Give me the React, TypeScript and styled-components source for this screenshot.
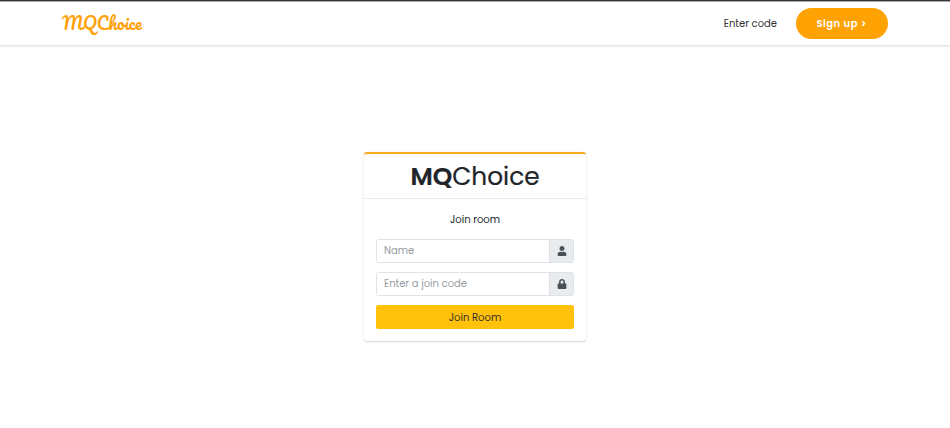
import React from 'react';
import styled, { createGlobalStyle } from 'styled-components';
import { FaUser, FaLock } from 'react-icons/fa';

const GlobalStyle = createGlobalStyle`
  *, *::before, *::after { box-sizing: border-box; }
  body {
    margin: 0;
    background: #fff;
    color: #212529;
    font-family: Poppins, Inter, 'Open Sans', sans-serif;
    font-size: 10px;
    overflow: hidden;
  }
`;

const Page = styled.div`
  height: 428px;
  display: flex;
  flex-direction: column;
`;

const Navbar = styled.header`
  height: 45px;
  flex: none;
  display: flex;
  align-items: center;
  padding: 0 62px 0;
  border-top: 1px solid #38333d;
  box-shadow: inset 0 1px 0 #aaa7ad, 0 1px 2px rgba(0, 0, 0, 0.16);
`;

const Logo = styled.a`
  color: #ffa20a;
  font-family: Pacifico, Lato, sans-serif;
  font-size: 17px;
  font-weight: 400;
  line-height: 24px;
  margin-right: auto;
`;

const NavLink = styled.a`
  color: #333;
  font-size: 10px;
  padding-top: 1px;
  margin-right: 18.5px;
`;

const SignUp = styled.a`
  width: 92.5px;
  height: 31px;
  display: flex;
  align-items: center;
  justify-content: center;
  padding-top: 1px;
  border-radius: 16px;
  background: #ffa203;
  color: #fff;
  font-size: 10px;
  font-weight: 600;
  letter-spacing: 0.5px;
`;

const Main = styled.main`
  flex: 1;
  display: flex;
  justify-content: center;
  align-items: flex-start;
  padding-top: 107px;
`;

const Card = styled.section`
  width: 222px;
  height: 189px;
  border-top: 2px solid #f9ac1f;
  border-radius: 3px;
  background: #fff;
  box-shadow: 0 0 1px rgba(0, 0, 0, 0.14), 0 1px 2px rgba(0, 0, 0, 0.16);
`;

const CardHeader = styled.h1`
  height: 45px;
  margin: 0;
  padding-top: 1px;
  display: flex;
  align-items: center;
  justify-content: center;
  border-bottom: 1px solid #e9eaeb;
  font-size: 24.8px;
  font-weight: 400;
  -webkit-text-stroke: 0.2px #212529;

  b { font-weight: 600; }
`;

const CardBody = styled.form`
  display: flex;
  flex-direction: column;
  padding: 13px 12px 12px;
`;

const Message = styled.p`
  margin: 0 0 11px;
  line-height: 16px;
  text-align: center;
`;

const InputGroup = styled.label`
  height: 24px;
  margin-bottom: 9px;
  display: flex;
  border: 1px solid #dfe3e7;
  border-radius: 2.5px;
  overflow: hidden;
`;

const Input = styled.input`
  flex: 1;
  min-width: 0;
  border: 0;
  outline: 0;
  padding: 0 7px;
  font: inherit;
  background: #fff;

  &::placeholder { color: #979ca1; opacity: 1; }
`;

const Addon = styled.span`
  width: 24px;
  display: flex;
  align-items: center;
  justify-content: center;
  border-left: 1px solid #dce0e4;
  background: #e9ecef;
  color: #495057;
  font-size: 10px;
`;

const Submit = styled.button`
  height: 24px;
  border: 0;
  border-radius: 2.5px;
  padding: 1px 0 0;
  background: #ffc10a;
  color: #343229;
  font: inherit;
`;

export default function App() {
  return (
    <>
      <GlobalStyle />
      <Page>
        <Navbar>
          <Logo>MQChoice</Logo>
          <NavLink>Enter code</NavLink>
          <SignUp>Sign up &gt;</SignUp>
        </Navbar>
        <Main>
          <Card>
            <CardHeader><b>MQ</b>Choice</CardHeader>
            <CardBody>
              <Message>Join room</Message>
              <InputGroup>
                <Input placeholder="Name" />
                <Addon><FaUser /></Addon>
              </InputGroup>
              <InputGroup>
                <Input placeholder="Enter a join code" />
                <Addon><FaLock /></Addon>
              </InputGroup>
              <Submit type="button">Join Room</Submit>
            </CardBody>
          </Card>
        </Main>
      </Page>
    </>
  );
}
